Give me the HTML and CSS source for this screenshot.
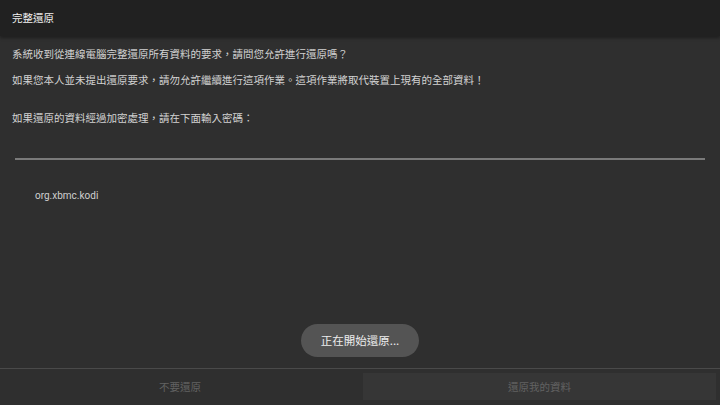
FILE: index.html
```html
<!DOCTYPE html>
<html lang="zh-Hant">
<head>
    <meta charset="UTF-8">
    <meta name="viewport" content="width=device-width, initial-scale=1.0">
    <title>完整還原</title>
    <link rel="stylesheet" href="styles.css">
</head>
<body>
    <div class="screen">
        <!-- 標題列 -->
        <header class="title-bar">完整還原</header>

        <main class="content">
            <p class="msg">系統收到從連線電腦完整還原所有資料的要求，請問您允許進行還原嗎？</p>
            <p class="msg">如果您本人並未提出還原要求，請勿允許繼續進行這項作業。這項作業將取代裝置上現有的全部資料！</p>
            <p class="msg msg-gap">如果還原的資料經過加密處理，請在下面輸入密碼：</p>
            <input class="password" type="password" aria-label="密碼">
            <div class="package">org.xbmc.kodi</div>
        </main>

        <div class="toast-row">
            <div class="toast">正在開始還原...</div>
        </div>

        <!-- 底部按鈕 -->
        <footer class="actions">
            <button class="action action-cancel">不要還原</button>
            <button class="action action-primary">還原我的資料</button>
        </footer>
    </div>
</body>
</html>
```

FILE: styles.css
```css
:root {
    --bg: #2f2f2f;
    --bar: #212121;
    --text: #d6d6d6;
    --muted: #626262;
}

* {
    box-sizing: border-box;
}

body {
    margin: 0;
    background: var(--bg);
    font-family: "Noto Sans CJK TC", "Noto Sans", Roboto, sans-serif;
    color: var(--text);
}

.screen {
    width: 720px;
    height: 405px;
    display: flex;
    flex-direction: column;
    overflow: hidden;
}

.title-bar {
    height: 36px;
    flex: none;
    background: var(--bar);
    color: #f2f2f2;
    font-size: 10.5px;
    line-height: 36px;
    padding-left: 12px;
    box-shadow: 0 2px 3px rgba(0, 0, 0, 0.35);
    position: relative;
    z-index: 1;
}

.content {
    flex: 1;
    padding: 10px 15px 0 12px;
}

.msg {
    margin: 0 0 10px;
    font-size: 10.5px;
    line-height: 16px;
    color: #d2d2d2;
}

.msg-gap {
    margin-top: 22px;
}

.password {
    display: block;
    width: 690px;
    margin: 14px 0 0 3px;
    height: 20px;
    background: transparent;
    border: none;
    border-bottom: 2px solid #7a7a7a;
    outline: none;
}

.package {
    margin: 30px 0 0 23px;
    font-family: Roboto, "Noto Sans", sans-serif;
    font-size: 10px;
    color: #cfcfcf;
}

.toast-row {
    display: flex;
    justify-content: center;
    padding-bottom: 11px;
}

.toast {
    width: 118px;
    height: 33px;
    border-radius: 17px;
    background: #545454;
    color: #ececec;
    font-size: 11.5px;
    line-height: 33px;
    text-align: center;
}

.actions {
    height: 37px;
    flex: none;
    border-top: 1px solid #4a4a4a;
    display: flex;
    gap: 3px;
    padding: 4px 4px 5px 0;
}

.action {
    border: none;
    background: transparent;
    color: var(--muted);
    font-family: inherit;
    font-size: 10.5px;
}

.action-cancel {
    flex: 0 0 360px;
}

.action-primary {
    flex: 1;
    background: #363636;
}
```
